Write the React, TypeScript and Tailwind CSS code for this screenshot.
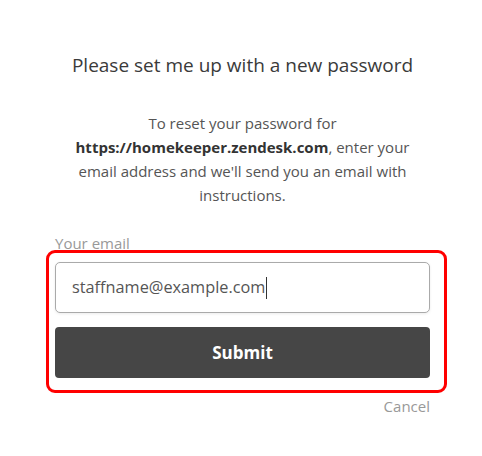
import React from "react";

const App: React.FC = () => {
  return (
    <div
      className="w-[482px] h-[456px] bg-white overflow-hidden"
      style={{ fontFamily: '"Open Sans", "Noto Sans", sans-serif' }}
    >
      <div className="ml-[55px] w-[375px] pt-[52px]">
        <h1 className="text-center text-[19px] leading-[27px] text-[#3a3a3a]">
          Please set me up with a new password
        </h1>

        <p className="mt-[32px] text-center text-[15px] leading-[24px] text-[#555]">
          To reset your password for
          <br />
          <span className="font-bold text-[#333]">
            https://homekeeper.zendesk.com
          </span>
          , enter your email address and we'll send you an email with
          instructions.
        </p>

        <div className="relative mt-[25px]">
          <label className="block text-[15px] leading-[22px] text-[#999]">
            Your email
          </label>

          <div className="mt-[8px] h-[51px] flex items-center rounded-[5px] border border-[#aaa] bg-white px-[16px] shadow-[0_1px_3px_rgba(0,0,0,0.08)]">
            <span className="text-[16.3px] text-[#555]">
              staffname@example.com
            </span>
            <span className="ml-[1px] h-[22px] w-px bg-[#333]" />
          </div>

          <button
            type="button"
            className="mt-[14px] w-full h-[51px] rounded-[4px] bg-[#464646] text-white text-[17px] font-bold"
          >
            Submit
          </button>

          {/* highlight annotation */}
          <div className="absolute left-[-9px] right-[-17px] top-[18px] h-[143px] rounded-[9px] border-[3.5px] border-[#ff0000] pointer-events-none" />

          <div className="mt-[18px] text-right text-[15px] leading-[20px] text-[#999]">
            Cancel
          </div>
        </div>
      </div>
    </div>
  );
};

export default App;
